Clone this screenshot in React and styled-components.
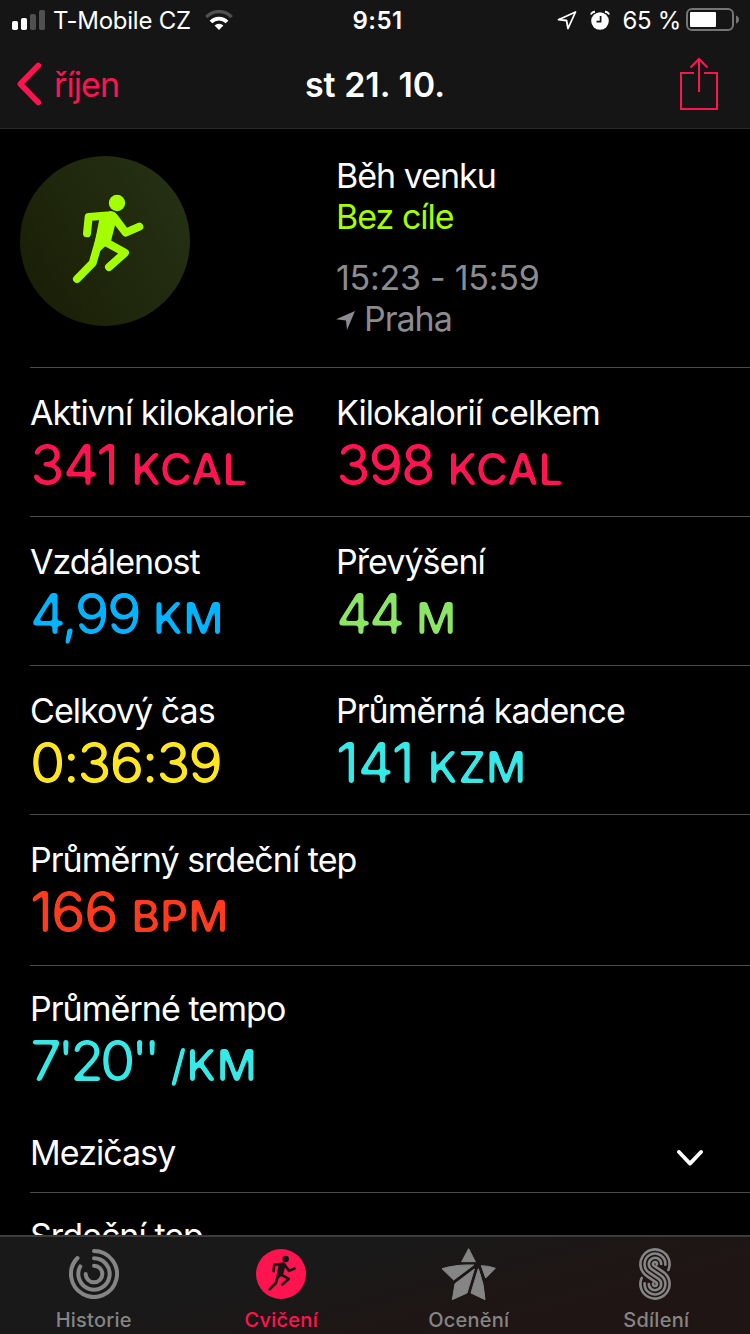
import styled, { createGlobalStyle } from "styled-components";

const PINK = "#ff1450";

const stripes = [14.6, 10.4, 6.2, 2].map((r, i) => ({ r, q: [2, 6.2, 10.4, 14.6][i] }));
const endAngles = [24, 4, 0, 10];

const rad = (deg) => (deg * Math.PI) / 180;

// each stripe swaps its outer radius for the inner one on the lower loop
const stripePath = ({ r, q }, i) => {
  const a = rad(34);
  const s = rad(endAngles[i]);
  const e = rad(endAngles[3 - i]);
  return [
    `M${16 + r * Math.cos(s)} ${16 + r * Math.sin(s)}`,
    `A${r} ${r} 0 1 0 ${16 - r * Math.sin(a)} ${16 + r * Math.cos(a)}`,
    `L${16 + q * Math.sin(a)} ${36 - q * Math.cos(a)}`,
    `A${q} ${q} 0 1 1 ${16 - q * Math.cos(e)} ${36 - q * Math.sin(e)}`,
  ].join(" ");
};

const Runner = ({ size, viewBox, color, limb = 24 }) => (
  <svg width={size} height={size} viewBox={viewBox}>
    <circle cx="321" cy="174" r="24.5" fill={color} />
    <path d="M268 222L300 199Q318 201 322 214L303 288L268 320L245 340Z" fill={color} />
    <g fill="none" stroke={color} strokeWidth={limb} strokeLinecap="round" strokeLinejoin="round">
      <path d="M231 265L236 216L302 211Q308 211 314 219L347 263L388 245" />
      <path d="M285 225L248 354L201 402" />
      <path d="M285 290L345 323L297 366" />
    </g>
  </svg>
);

const RingsIcon = () => (
  <svg width="50" height="50" viewBox="207 87 150 150" fill="none" stroke="currentColor" strokeWidth="12" strokeLinecap="round">
    <path d="M282 93A69 69 0 1 1 232.400 114" />
    <path d="M282 115A47 47 0 1 1 240.900 139.200" />
    <path d="M282 137A25 25 0 1 1 257 162" />
  </svg>
);

const StarIcon = () => (
  <svg width="58" height="56" viewBox="196 80 174 168" fill="currentColor" stroke="currentColor" strokeWidth="3" strokeLinejoin="round">
    <path d="M282 88L261 127L302 127Z" />
    <path d="M202 148Q245 135 297 137L237 182Z" />
    <path d="M320 139Q342 139 362 147L333 176Z" />
    <path d="M299 149L241 193L233 241L277 221Z" />
    <path d="M311 148L289 221L331 241Q329 195 311 148Z" />
  </svg>
);

const SharingIcon = () => (
  <Stripes width="32" height="52" viewBox="0 0 32 52" fill="none" stroke="currentColor" strokeWidth="2.6" strokeLinecap="round">
    {stripes.map((stripe, i) => (
      <path key={i} d={stripePath(stripe, i)} />
    ))}
  </Stripes>
);

// softens the corners of the big numerals into round terminals
const RoundFilter = () => (
  <FilterDefs width="0" height="0" aria-hidden="true">
    <filter id="rounded" x="-5%" y="-10%" width="110%" height="120%" colorInterpolationFilters="sRGB">
      <feGaussianBlur stdDeviation="1.5" />
      <feComponentTransfer>
        <feFuncA type="linear" slope="4.5" intercept="-1.7" />
      </feComponentTransfer>
    </filter>
  </FilterDefs>
);

const metrics = [
  [
    { label: "Aktivní kilokalorie", value: "341", unit: "KCAL", color: PINK, tracking: -1.7 },
    { label: "Kilokalorií celkem", value: "398", unit: "KCAL", color: PINK },
  ],
  [
    { label: "Vzdálenost", value: "4,99", unit: "KM", color: "#00b4ff", tracking: -2.6 },
    { label: "Převýšení", value: "44", unit: "M", color: "#8ce566", tracking: -3.2 },
  ],
  [
    { label: "Celkový čas", value: "0:36:39", color: "#ffe620" },
    { label: "Průměrná kadence", value: "141", unit: "KZM", color: "#37e8e6", tracking: -1 },
  ],
  [{ label: "Průměrný srdeční tep", value: "166", unit: "BPM", color: "#ff3b1d", tracking: -1.7 }],
  [{ label: "Průměrné tempo", value: "7'20''", unit: "/KM", color: "#37e8e6", tracking: -4.2 }],
];

const tabs = [
  { label: "Historie", icon: <RingsIcon /> },
  {
    label: "Cvičení",
    active: true,
    icon: (
      <ActiveDisc>
        <Runner size={50} viewBox="98.5 99 375 375" color="#1c1414" limb={20} />
      </ActiveDisc>
    ),
  },
  { label: "Ocenění", icon: <StarIcon /> },
  { label: "Sdílení", icon: <SharingIcon /> },
];

function ActiveDisc({ children }) {
  return <Disc>{children}</Disc>;
}

const App = () => (
  <Screen>
    <GlobalStyle />
    <RoundFilter />
    <StatusBar>
      <StatusSide>
        <svg width="33" height="20" viewBox="0 0 33 20" fill="#fff">
          <rect x="0" y="11" width="6" height="9" rx="1.8" />
          <rect x="9" y="8" width="6" height="12" rx="1.8" />
          <rect x="18" y="4" width="6" height="16" rx="1.8" fill="#505050" />
          <rect x="27" y="0" width="6" height="20" rx="1.8" fill="#505050" />
        </svg>
        <Carrier>T-Mobile CZ</Carrier>
        <svg width="28" height="20" viewBox="0 0 28 20" fill="none" strokeWidth="3.4">
          <path d="M1.300 7.200A17.300 17.300 0 0 1 26.700 7.200" stroke="#505050" />
          <path d="M6 12A11 11 0 0 1 22 12" stroke="#fff" strokeWidth="3.800" />
          <path d="M9.600 15.600A6.200 6.200 0 0 1 18.400 15.600L14 20Z" fill="#fff" />
        </svg>
      </StatusSide>
      <Clock>9:51</Clock>
      <StatusSide $end>
        <svg width="20" height="20" viewBox="0 0 20 20" fill="none" stroke="#fff" strokeWidth="1.8" strokeLinejoin="round">
          <path d="M1.500 9.700L18.500 2L11 18.500L9.500 10.500Z" />
        </svg>
        <Alarm width="20" height="20" viewBox="0 0 20 20">
          <circle cx="10" cy="11" r="8.800" fill="#fff" />
          <path d="M0.900 4.500Q2 1.800 5 1.700M19.100 4.500Q18 1.800 15 1.700" fill="none" stroke="#fff" strokeWidth="1.900" />
          <path d="M10.600 6V11.700H6.500" fill="none" stroke="#151515" strokeWidth="1.700" />
        </Alarm>
        <Percent>65 %</Percent>
        <svg width="54" height="24" viewBox="0 0 54 24">
          <rect x="1" y="1" width="46" height="21" rx="5" fill="none" stroke="#757575" strokeWidth="2" />
          <rect x="4" y="4" width="26" height="15" rx="1" fill="#fff" />
          <path d="M50 7.500Q53 8.500 53 11.500T50 15.500Z" fill="#757575" />
        </svg>
      </StatusSide>
    </StatusBar>

    <NavBar>
      <BackButton>
        <svg width="26" height="44" viewBox="0 0 26 44" fill="none" stroke={PINK} strokeWidth="5.600" strokeLinecap="round" strokeLinejoin="round">
          <path d="M22.300 3.500L4.300 22L22.300 40.500" />
        </svg>
        říjen
      </BackButton>
      <Title>st 21. 10.</Title>
      <ShareButton>
        <svg width="40" height="54" viewBox="0 0 40 54" fill="none" stroke={PINK} strokeWidth="2">
          <path d="M15 16H2V52H38V16H25" />
          <path d="M20 35V2M11.500 10.500L20 2L28.500 10.500" />
        </svg>
      </ShareButton>
    </NavBar>

    <Content>
      <Summary>
        <Badge>
          <Runner size={170} viewBox="30 33 510 510" color="#a4ff00" />
        </Badge>
        <Details>
          <Line>Běh venku</Line>
          <Line $color="#a4ff00">Bez cíle</Line>
          <Line $color="#8b8b90" $spaced>15:23 - 15:59</Line>
          <Line $color="#8b8b90">
            <svg width="19" height="22" viewBox="0 -3 19 22" fill="currentColor">
              <path d="M0 8.300L19 0L11 19L10 9.500Z" />
            </svg>
            Praha
          </Line>
        </Details>
      </Summary>

      {metrics.map((row, i) => (
        <MetricRow key={i} $tall={i === metrics.length - 2} $last={i === metrics.length - 1}>
          {row.map((metric) => (
            <Metric key={metric.label}>
              <Label>{metric.label}</Label>
              <Value $color={metric.color} $tracking={metric.tracking}>
                {metric.value}
                {metric.unit && <Unit>{metric.unit}</Unit>}
              </Value>
            </Metric>
          ))}
        </MetricRow>
      ))}

      <SplitsRow>
        <Label>Mezičasy</Label>
        <Chevron width="26" height="16" viewBox="0 0 26 16" fill="none" stroke="#fff" strokeWidth="3.800" strokeLinecap="round" strokeLinejoin="round">
          <path d="M2 2L13 13.600L24 2" />
        </Chevron>
      </SplitsRow>
      <HeartSection>
        <Label>Srdeční tep</Label>
      </HeartSection>
    </Content>

    <TabBar>
      {tabs.map((tab) => (
        <Tab key={tab.label} $active={tab.active}>
          <TabIcon>{tab.icon}</TabIcon>
          <span>{tab.label}</span>
        </Tab>
      ))}
    </TabBar>
  </Screen>
);

export default App;

const GlobalStyle = createGlobalStyle`
  * {
    box-sizing: border-box;
  }

  body {
    margin: 0;
    background: #000;
  }

  svg {
    display: block;
    flex-shrink: 0;
  }

  button {
    border: none;
    padding: 0;
    background: none;
    font: inherit;
    color: inherit;
    cursor: pointer;
  }
`;
const Screen = styled.div`
  position: relative;
  width: 750px;
  height: 1334px;
  display: flex;
  flex-direction: column;
  overflow: hidden;
  background: #000;
  color: #fff;
  font-family: Inter, "Liberation Sans", sans-serif;
`;
const FilterDefs = styled.svg`
  position: absolute;
`;
const Stripes = styled.svg`
  margin-right: 2px;
`;
const StatusBar = styled.div`
  height: 40px;
  flex-shrink: 0;
  display: grid;
  grid-template-columns: 1fr auto 1fr;
  align-items: center;
  padding: 0 10px 0 12px;
  background: #151515;
  font-size: 24px;
`;
const StatusSide = styled.div`
  display: flex;
  align-items: center;
  justify-content: ${({ $end }) => ($end ? "flex-end" : "flex-start")};
`;
const Carrier = styled.span`
  margin: 0 14px 0 8px;
  letter-spacing: -0.25px;
`;
const Clock = styled.span`
  margin-left: 3px;
  font-weight: 600;
  letter-spacing: 0.5px;
`;
const Alarm = styled.svg`
  margin: 0 12px 0 13px;
`;
const Percent = styled.span`
  margin-right: 5px;
  letter-spacing: -0.3px;
`;
const NavBar = styled.div`
  height: 89px;
  flex-shrink: 0;
  display: grid;
  grid-template-columns: 1fr auto 1fr;
  align-items: center;
  padding: 0 16px;
  background: #151515;
  border-bottom: 1px solid #2b2b2d;
`;
const BackButton = styled.button`
  display: flex;
  align-items: center;
  gap: 12px;
  && {
    color: ${PINK};
    font-size: 34px;
    letter-spacing: -0.9px;
  }
`;
const Title = styled.h1`
  margin: 0;
  font-size: 34px;
  font-weight: 600;
`;
const ShareButton = styled.button`
  justify-self: end;
  margin-right: 15px;
`;
const Content = styled.main`
  flex: 1;
  min-height: 0;
  overflow: hidden;
`;
const Summary = styled.section`
  height: 239px;
  margin-left: 30px;
  display: flex;
  border-bottom: 1px solid #4a4a4a;
`;
const Badge = styled.div`
  width: 170px;
  height: 170px;
  margin: 27px 146px 0 -10px;
  border-radius: 50%;
  background: linear-gradient(60deg, #181d04, #273216);
`;
const Details = styled.div`
  padding-top: 26px;
`;
const Line = styled.div`
  display: flex;
  align-items: center;
  gap: 9px;
  height: 41px;
  margin-top: ${({ $spaced }) => ($spaced ? "20px" : "0")};
  font-size: 34px;
  line-height: 41px;
  letter-spacing: ${({ $spaced }) => ($spaced ? "-0.25px" : "-1px")};
  color: ${({ $color }) => $color || "#fff"};
`;
const MetricRow = styled.section`
  height: ${({ $last, $tall }) => ($last ? "141px" : $tall ? "151px" : "149px")};
  margin-left: 30px;
  padding-top: ${({ $last }) => ($last ? "22px" : "24px")};
  display: grid;
  grid-template-columns: 306px 1fr;
  border-bottom: ${({ $last }) => ($last ? "none" : "1px solid #4a4a4a")};
`;
const Metric = styled.div`
  white-space: nowrap;
`;
const Label = styled.div`
  font-size: 34px;
  line-height: 41px;
  letter-spacing: -0.95px;
`;
const Value = styled.div`
  margin-top: 2px;
  font-size: 56px;
  line-height: 60px;
  letter-spacing: ${({ $tracking }) => $tracking || -2.2}px;
  color: ${({ $color }) => $color};
  filter: url(#rounded);
`;
const Unit = styled.span`
  margin-left: 14px;
  font-size: 44px;
  line-height: 1;
  font-weight: 500;
  letter-spacing: 0;
`;
const SplitsRow = styled.button`
  width: 720px;
  height: 86px;
  margin-left: 30px;
  display: flex;
  align-items: center;
  justify-content: space-between;
  && {
    padding: 6px 47px 0 0;
    border-bottom: 1px solid #4a4a4a;
  }
`;
const Chevron = styled.svg`
  margin-top: 11px;
`;
const HeartSection = styled.section`
  padding: 22px 0 0 30px;
`;
const TabBar = styled.nav`
  height: 99px;
  flex-shrink: 0;
  display: grid;
  grid-template-columns: repeat(4, 187.5px);
  border-top: 2px solid #3c3c3c;
  background: linear-gradient(165deg, #191919 35%, #1f1514 75%);
`;
const Tab = styled.button`
  display: flex;
  flex-direction: column;
  align-items: center;
  && {
    padding-top: 8px;
    color: ${({ $active }) => ($active ? PINK : "#858585")};
    font-size: 20px;
    font-weight: 500;
    line-height: 24px;
    letter-spacing: 0.25px;
  }
`;
const TabIcon = styled.div`
  height: 58px;
  margin-bottom: 5px;
  display: flex;
  align-items: center;
`;
const Disc = styled.div`
  width: 50px;
  height: 50px;
  border-radius: 50%;
  background: ${PINK};
`;
